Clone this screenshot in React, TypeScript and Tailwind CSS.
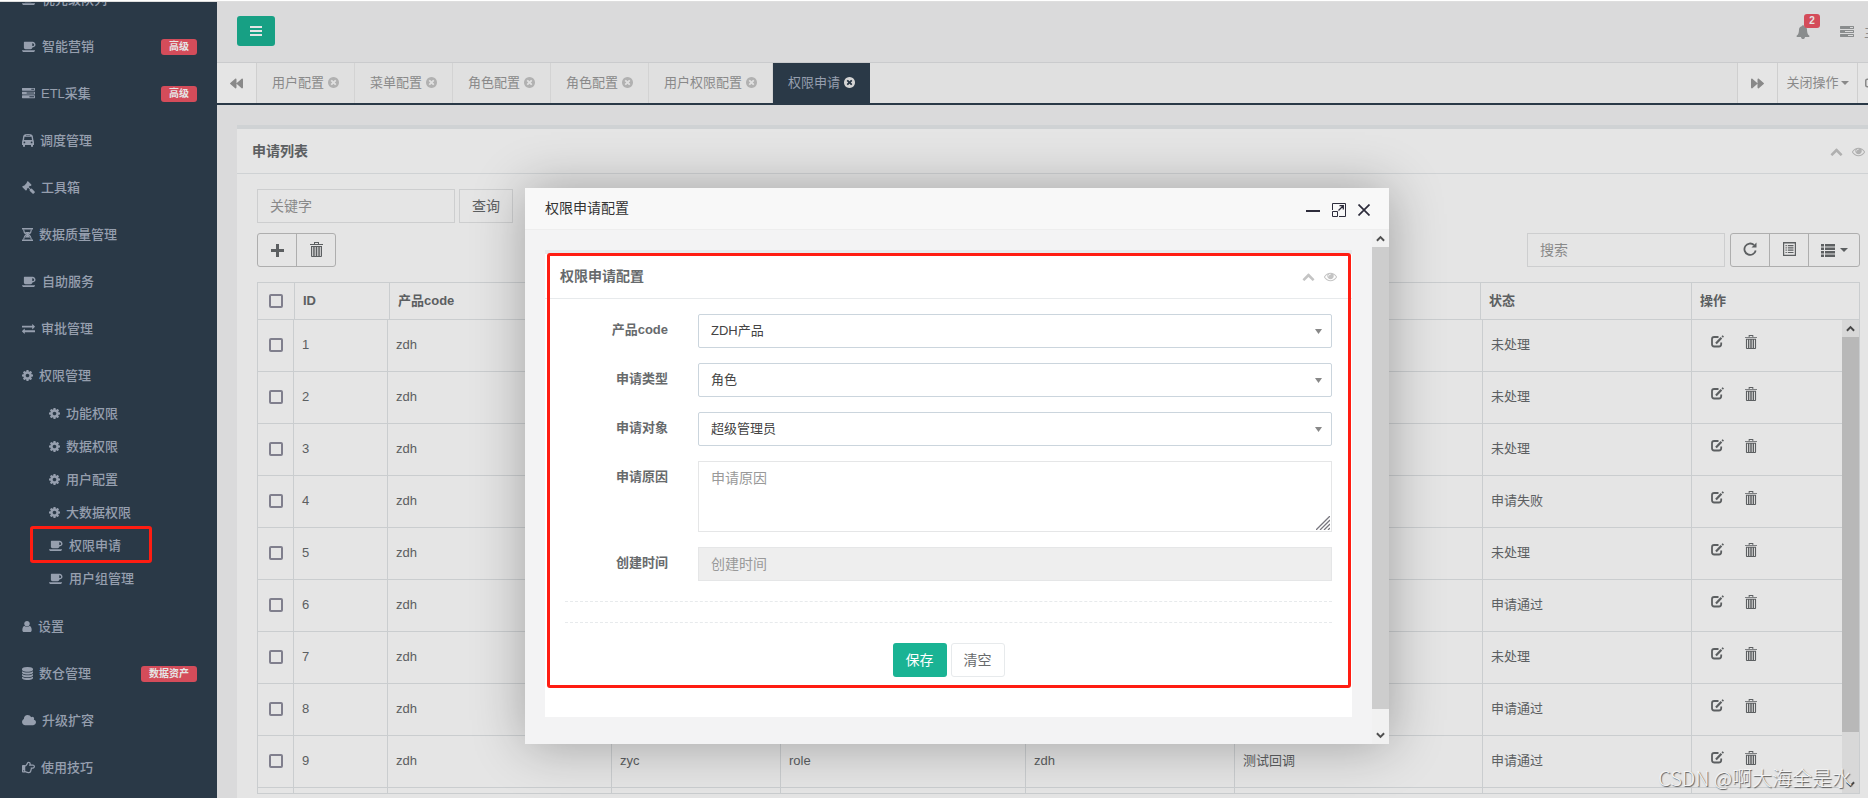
import { useState } from "react";
import type { ReactNode } from "react";
import { FaBackward, FaForward, FaRegHandPointRight, FaSignOutAlt } from "react-icons/fa";

type IconProps = { className?: string };

function CoffeeIcon({ className = "" }: IconProps) {
  return (
    <svg viewBox="0 0 1920 1792" className={`h-[13px] w-[14px] ${className}`} fill="currentColor">
      <path d="M1664 640q0-80-56-136t-136-56h-64v384h64q80 0 136-56t56-136zm-1664 768h1792q0 106-75 181t-181 75h-1280q-106 0-181-75t-75-181zm1856-768q0 159-112.5 271.5t-271.5 112.5h-64v32q0 92-66 158t-158 66h-704q-92 0-158-66t-66-158v-736q0-26 19-45t45-19h1152q159 0 271.5 112.5t112.5 271.5z" />
    </svg>
  );
}

function TasksIcon({ className = "h-[13px] w-[13px]" }: IconProps) {
  return (
    <svg viewBox="0 0 1792 1792" className={className} fill="currentColor">
      <path d="M1024 1408h640v-128h-640v128zm-384-512h1024v-128h-1024v128zm640-512h384v-128h-384v128zm512 832v256q0 26-19 45t-45 19h-1664q-26 0-45-19t-19-45v-256q0-26 19-45t45-19h1664q26 0 45 19t19 45zm0-512v256q0 26-19 45t-45 19h-1664q-26 0-45-19t-19-45v-256q0-26 19-45t45-19h1664q26 0 45 19t19 45zm0-512v256q0 26-19 45t-45 19h-1664q-26 0-45-19t-19-45v-256q0-26 19-45t45-19h1664q26 0 45 19t19 45z" />
    </svg>
  );
}

function BusIcon() {
  return (
    <svg viewBox="0 0 12 13" className="h-[13px] w-[12px]" fill="currentColor">
      <path
        fillRule="evenodd"
        d="M3.200 0.300Q6-0.300 8.800 0.300Q10.600 0.700 10.900 2.500L11.300 5.500Q12 7 12 8.500V11H11V12.200Q11 13 10 13T9 12.200V11H3V12.200Q3 13 2 13T1 12.200V11H0V8.500Q0 7 0.700 5.500L1.100 2.500Q1.400 0.700 3.200 0.300zM4 1.200H8V1.800H4zM2.500 2.800L2 6H10L9.500 2.800zM2.400 7.500A0.900 0.900 0 1 0 2.400 9.300A0.900 0.900 0 1 0 2.400 7.500zM9.600 7.500A0.900 0.900 0 1 0 9.600 9.300A0.900 0.900 0 1 0 9.600 7.500z"
      />
    </svg>
  );
}

function HourglassIcon() {
  return (
    <svg viewBox="0 0 11 13" className="h-[13px] w-[11px]" fill="none" stroke="currentColor">
      <path d="M0 0.800H11M0 12.200H11" strokeWidth="1.600" />
      <path d="M1.600 1.500Q1.600 4.500 4.400 6.500Q1.600 8.500 1.600 11.500M9.400 1.500Q9.400 4.500 6.600 6.500Q9.400 8.500 9.400 11.500" strokeWidth="1.200" />
      <path d="M3 4H8L6 6.500L8.200 9.500H2.800L5 6.500z" fill="currentColor" stroke="none" />
    </svg>
  );
}

function CogIcon() {
  return (
    <svg viewBox="128 0 1536 1792" className="h-[13px] w-[11px]" fill="currentColor">
      <path d="M1152 896q0-106-75-181t-181-75-181 75-75 181 75 181 181 75 181-75 75-181zm512-109v222q0 12-8 23t-20 13l-185 28q-19 54-39 91 35 50 107 138 10 12 10 25t-9 23q-27 37-99 108t-94 71q-12 0-26-9l-138-108q-44 23-91 38-16 136-29 186-7 28-36 28h-222q-14 0-24.5-8.5t-11.5-21.5l-28-184q-49-16-90-37l-141 107q-10 9-25 9-14 0-25-11-126-114-165-168-7-10-7-23 0-12 8-23 15-21 51-66.5t54-70.5q-27-50-41-99l-183-27q-13-2-21-12.5t-8-23.5v-222q0-12 8-23t19-13l186-28q14-46 39-92-40-57-107-138-10-12-10-24 0-10 9-23 26-36 98.5-107.5t94.5-71.5q13 0 26 10l138 107q44-23 91-38 16-136 29-186 7-28 36-28h222q14 0 24.5 8.5t11.5 21.5l28 184q49 16 90 37l142-107q9-9 24-9 13 0 25 10 129 119 165 170 7 8 7 22 0 12-8 23-15 21-51 66.5t-54 70.5q26 50 41 98l183 28q13 2 21 12.5t8 23.5z" />
    </svg>
  );
}

function GavelIcon() {
  return (
    <svg viewBox="0 0 1792 1792" className="h-[13px] w-[13px]" fill="currentColor">
      <path d="M1771 1536q0 53-37 90l-107 108q-39 37-91 37-53 0-90-37l-363-364q-38-36-38-90 0-53 43-96l-256-256-126 126q-14 14-34 14t-34-14q2 2 12.5 12t12.5 13 10 11.5 10 13.5 6 13.5 5.5 16.5 1.5 18q0 38-28 68-3 3-16.5 18t-19 20.5-18.5 16.5-22 15.5-22 9-26 4.5q-40 0-68-28l-408-408q-28-28-28-68 0-13 4.5-26t9-22 15.5-22 16.5-18.5 20.5-19 18-16.5q30-28 68-28 10 0 18 1.5t16.5 5.5 13.5 6 13.5 10 11.5 10 13 12.5 12 12.5q-14-14-14-34t14-34l348-348q14-14 34-14t34 14q-2-2-12.5-12t-12.5-13-10-11.5-10-13.5-6-13.5-5.500-16.5-1.5-18q0-38 28-68 3-3 16.5-18t19-20.5 18.5-16.5 22-15.5 22-9 26-4.5q40 0 68 28l408 408q28 28 28 68 0 13-4.5 26t-9 22-15.5 22-16.5 18.5-20.5 19-18 16.5q-30 28-68 28-10 0-18-1.5t-16.5-5.5-13.5-6-13.5-10-11.5-10-13-12.5-12-12.5q14 14 14 34t-14 34l-126 126 256 256q43-43 96-43 52 0 91 37l363 363q37 39 37 91z" />
    </svg>
  );
}

function ExchangeIcon() {
  return (
    <svg viewBox="0 0 1792 1792" className="h-[13px] w-[13px]" fill="currentColor">
      <path d="M1792 1184v192q0 13-9.5 22.5t-22.5 9.5h-1376v192q0 13-9.5 22.5t-22.5 9.5q-12 0-24-10l-319-320q-9-9-9-22 0-14 9-23l320-320q9-9 23-9 13 0 22.5 9.5t9.5 22.5v192h1376q13 0 22.5 9.5t9.5 22.5zm0-544q0 14-9 23l-320 320q-9 9-23 9-13 0-22.5-9.5t-9.5-22.5v-192h-1376q-13 0-22.5-9.5t-9.5-22.5v-192q0-13 9.5-22.5t22.5-9.5h1376v-192q0-14 9-23t23-9q12 0 24 10l319 319q9 9 9 23z" />
    </svg>
  );
}

function UserIcon() {
  return (
    <svg viewBox="256 0 1280 1792" className="h-[13px] w-[10px]" fill="currentColor">
      <path d="M1536 1399q0 109-62.5 187t-150.5 78h-854q-88 0-150.5-78t-62.5-187q0-85 8.5-160.5t31.5-152 58.5-131 94-89 134.5-34.5q131 128 313 128t313-128q76 0 134.5 34.5t94 89 58.5 131 31.5 152 8.5 160.5zm-256-887q0 159-112.5 271.5t-271.5 112.5-271.5-112.5-112.5-271.5 112.5-271.5 271.5-112.5 271.5 112.5 112.5 271.5z" />
    </svg>
  );
}

function DatabaseIcon() {
  return (
    <svg viewBox="128 0 1536 1792" className="h-[13px] w-[11px]" fill="currentColor">
      <path d="M896 768q237 0 443-43t325-127v170q0 69-103 128t-280 93.5-385 34.5-385-34.5-280-93.5-103-128v-170q119 84 325 127t443 43zm0 768q237 0 443-43t325-127v170q0 69-103 128t-280 93.5-385 34.5-385-34.5-280-93.5-103-128v-170q119 84 325 127t443 43zm0-384q237 0 443-43t325-127v170q0 69-103 128t-280 93.5-385 34.5-385-34.5-280-93.5-103-128v-170q119 84 325 127t443 43zm0-1152q208 0 385 34.5t280 93.5 103 128v128q0 69-103 128t-280 93.5-385 34.5-385-34.5-280-93.5-103-128v-128q0-69 103-128t280-93.5 385-34.5z" />
    </svg>
  );
}

function CloudIcon() {
  return (
    <svg viewBox="64 0 1920 1792" className="h-[13px] w-[14px]" fill="currentColor">
      <path d="M1984 1152q0 159-112.5 271.5t-271.5 112.5h-1088q-185 0-316.5-131.5t-131.5-316.5q0-132 71-241.5t187-163.5q-2-28-2-43 0-212 150-362t362-150q158 0 286.5 88t187.5 230q70-62 166-62 106 0 181 75t75 181q0 75-41 138 129 30 213 134.5t84 239.5z" />
    </svg>
  );
}

function BellIcon() {
  return (
    <svg viewBox="0 0 1792 1792" className="h-[14px] w-[14px]" fill="currentColor">
      <path d="M1728 1408q0 52-38 90t-90 38h-448q0 106-75 181t-181 75-181-75-75-181h-448q-52 0-90-38t-38-90q50-42 91-88t85-119.5 74.5-158.5 50-206 19.5-260q0-152 117-282.5t307-158.5q-8-19-8-39 0-40 28-68t68-28 68 28 28 68q0 20-8 39 190 28 307 158.5t117 282.5q0 139 19.5 260t50 206 74.5 158.5 85 119.5 91 88z" />
    </svg>
  );
}

function TimesCircleIcon({ className = "" }: IconProps) {
  return (
    <svg viewBox="128 128 1536 1536" className={`h-[11px] w-[11px] ${className}`} fill="currentColor">
      <path d="M1277 1122q0-26-19-45l-181-181 181-181q19-19 19-45 0-27-19-46l-90-90q-19-19-46-19-26 0-45 19l-181 181-181-181q-19-19-45-19-27 0-46 19l-90 90q-19 19-19 46 0 26 19 45l181 181-181 181q-19 19-19 45 0 27 19 46l90 90q19 19 46 19 26 0 45-19l181-181 181 181q19 19 45 19 27 0 46-19l90-90q19-19 19-46zm387-226q0 209-103 385.5t-279.5 279.5-385.5 103-385.5-103-279.5-279.5-103-385.5 103-385.5 279.5-279.5 385.5-103 385.5 103 279.5 279.5 103 385.5z" />
    </svg>
  );
}

function ChevronUpIcon() {
  return (
    <svg viewBox="0 0 1792 1792" className="h-[13px] w-[13px]" fill="currentColor">
      <path d="M1683 1331l-166 165q-19 19-45 19t-45-19l-531-531-531 531q-19 19-45 19t-45-19l-166-165q-19-19-19-45.5t19-45.5l742-741q19-19 45-19t45 19l742 741q19 19 19 45.5t-19 45.5z" />
    </svg>
  );
}

function EyeIcon() {
  return (
    <svg viewBox="0 0 1792 1792" className="h-[13px] w-[13px]" fill="currentColor">
      <path d="M1664 960q-152-236-381-353 61 104 61 225 0 185-131.5 316.5t-316.5 131.5-316.5-131.5-131.5-316.5q0-121 61-225-229 117-381 353 133 205 333.5 326.5t434.5 121.5 434.5-121.5 333.5-326.5zm-720-384q0-20-14-34t-34-14q-125 0-214.5 89.5t-89.5 214.5q0 20 14 34t34 14 34-14 14-34q0-86 61-147t147-61q20 0 34-14t14-34zm848 384q0 34-20 69-140 230-376.5 368.5t-499.5 138.5-499.5-139-376.5-368q-20-35-20-69t20-69q140-229 376.5-368t499.5-139 499.5 139 376.5 368q20 35 20 69z" />
    </svg>
  );
}

function TrashIcon({ className = "h-[14px] w-[12px]" }: IconProps) {
  return (
    <svg viewBox="0 0 13 15" className={className} fill="currentColor">
      <path d="M4 0h5v2h4v1H0V2h4zM5 1v1h3V1z" fillRule="evenodd" />
      <path d="M1 4h11v10q0 1-1 1H2q-1 0-1-1zM2.2 5v9h1V5zm2.5 0v9h1V5zm2.6 0v9h1V5zm2.5 0v9h1V5z" fillRule="evenodd" />
    </svg>
  );
}

function EditIcon() {
  return (
    <svg viewBox="0 0 14 13" className="h-[13px] w-[14px]" fill="none" stroke="currentColor">
      <path d="M7.5 2H3.2Q1 2 1 4.200V9.300Q1 11.500 3.200 11.500H8Q10.200 11.500 10.200 9.300V7.500" strokeWidth="1.800" />
      <path d="M5 8.500L10.400 2.800" strokeWidth="2.200" />
      <path d="M11.200 2L12.300 0.900" strokeWidth="2" />
    </svg>
  );
}

function Caret() {
  return (
    <svg viewBox="0 0 8 4" className="h-[4px] w-[8px]" fill="currentColor">
      <path d="M0 0h8L4 4z" />
    </svg>
  );
}

function PanelTools() {
  return (
    <div className="flex items-center gap-[9px] text-[#c4c4c4]">
      <button type="button" aria-label="收起">
        <ChevronUpIcon />
      </button>
      <button type="button" aria-label="显示">
        <EyeIcon />
      </button>
    </div>
  );
}

function ScrollBar({ thumb }: { thumb: string }) {
  return (
    <div className="flex w-[17px] shrink-0 flex-col bg-[#f1f1f1] text-[#505050]">
      <div className="flex h-[17px] items-center justify-center">
        <svg viewBox="0 0 10 7" className="h-[7px] w-[9px]" fill="none" stroke="currentColor" strokeWidth="2.200">
          <path d="M1 6l4-4 4 4" />
        </svg>
      </div>
      <div className="flex-1">
        <div className={`bg-[#cdcdcd] ${thumb}`} />
      </div>
      <div className="flex h-[17px] items-center justify-center">
        <svg viewBox="0 0 10 7" className="h-[7px] w-[9px]" fill="none" stroke="currentColor" strokeWidth="2.200">
          <path d="M1 1l4 4 4-4" />
        </svg>
      </div>
    </div>
  );
}

type MenuItem = { label: string; icon: ReactNode; badge?: string; marked?: boolean };

const TOP_MENU: MenuItem[] = [
  { label: "优先级队列", icon: <CoffeeIcon /> },
  { label: "智能营销", icon: <CoffeeIcon />, badge: "高级" },
  { label: "ETL采集", icon: <TasksIcon />, badge: "高级" },
  { label: "调度管理", icon: <BusIcon /> },
  { label: "工具箱", icon: <GavelIcon /> },
  { label: "数据质量管理", icon: <HourglassIcon /> },
  { label: "自助服务", icon: <CoffeeIcon /> },
  { label: "审批管理", icon: <ExchangeIcon /> },
  { label: "权限管理", icon: <CogIcon /> },
];

const SUB_MENU: MenuItem[] = [
  { label: "功能权限", icon: <CogIcon /> },
  { label: "数据权限", icon: <CogIcon /> },
  { label: "用户配置", icon: <CogIcon /> },
  { label: "大数据权限", icon: <CogIcon /> },
  { label: "权限申请", icon: <CoffeeIcon />, marked: true },
  { label: "用户组管理", icon: <CoffeeIcon /> },
];

const BOTTOM_MENU: MenuItem[] = [
  { label: "设置", icon: <UserIcon /> },
  { label: "数仓管理", icon: <DatabaseIcon />, badge: "数据资产" },
  { label: "升级扩容", icon: <CloudIcon /> },
  { label: "使用技巧", icon: <FaRegHandPointRight className="h-[13px] w-[13px]" /> },
];

const TABS = ["用户配置", "菜单配置", "角色配置", "角色配置", "用户权限配置", "权限申请"];
const ACTIVE_TAB = 5;

const ROWS = [
  { id: 1, status: "未处理" },
  { id: 2, status: "未处理" },
  { id: 3, status: "未处理" },
  { id: 4, status: "申请失败" },
  { id: 5, status: "未处理" },
  { id: 6, status: "申请通过" },
  { id: 7, status: "未处理" },
  { id: 8, status: "申请通过" },
  { id: 9, status: "申请通过" },
];

function MenuLink({ item }: { item: MenuItem }) {
  return (
    <li>
      <a href="#" className="flex h-[47px] items-center gap-[6px] pr-5 pl-[22px]">
        {item.icon}
        <span>{item.label}</span>
        {item.badge && (
          <span className="ml-auto h-4 rounded-[3px] bg-[#ed5565] px-2 text-[10px] leading-[15px] font-bold text-white">
            {item.badge}
          </span>
        )}
      </a>
    </li>
  );
}

function Sidebar() {
  return (
    <aside className="w-[217px] shrink-0 overflow-hidden bg-[#2f4050] text-[13px] font-medium text-[#a7b1c2]">
      <ul className="-mt-[26px]">
        {TOP_MENU.map((item) => (
          <MenuLink key={item.label} item={item} />
        ))}
        <li>
          <ul className="-mt-[2px] pb-2">
            {SUB_MENU.map((item) => (
              <li key={item.label} className="relative">
                <a href="#" className="flex h-[33px] items-center gap-[6px] pl-[49px]">
                  {item.icon}
                  <span>{item.label}</span>
                </a>
                {item.marked && (
                  <div className="absolute -top-[3px] left-[30px] z-20 h-[37px] w-[122px] rounded-[3px] border-[3px] border-[#ff1d12]" />
                )}
              </li>
            ))}
          </ul>
        </li>
        {BOTTOM_MENU.map((item) => (
          <MenuLink key={item.label} item={item} />
        ))}
      </ul>
    </aside>
  );
}

function TopBar() {
  return (
    <header className="flex h-[61px] items-center justify-between border-b border-[#e1e3e5] pr-[22px] pb-[2px] pl-5">
      <button
        type="button"
        aria-label="菜单"
        className="flex h-[30px] w-[38px] items-center justify-center rounded-[3px] bg-[#1ab394] text-white"
      >
        <svg viewBox="0 0 12 10" className="h-[10px] w-[12px]" fill="currentColor">
          <path d="M0 0h12v2H0zM0 4h12v2H0zM0 8h12v2H0z" />
        </svg>
      </button>
      <div className="flex items-center gap-[30px] pt-[2px] text-[#999c9e]">
        <a href="#" aria-label="消息" className="relative">
          <BellIcon />
          <span className="absolute -top-[11px] left-2 h-[14px] w-4 rounded-[3px] bg-[#ed5565] text-center text-[10px] leading-[14px] font-bold text-white">
            2
          </span>
        </a>
        <a href="#" className="flex items-center gap-[10px] text-[14px]">
          <TasksIcon className="h-[14px] w-[14px]" />
          主题
        </a>
      </div>
    </header>
  );
}

function TabBar() {
  return (
    <nav className="flex h-[42px] border-b-2 border-[#2f4050] bg-[#fafafa] text-[13px] text-[#999]">
      <button type="button" aria-label="向左" className="flex w-10 items-center justify-center border-r border-[#e7e7e7] bg-white">
        <FaBackward className="h-[13px] w-[13px]" />
      </button>
      {TABS.map((tab, i) => (
        <a
          key={i}
          href="#"
          className={
            i === ACTIVE_TAB
              ? "flex items-center gap-1 bg-[#2f4050] px-[15px] pb-px text-[#a7b1c2]"
              : "flex items-center gap-1 border-r border-[#ebebeb] px-[15px] pb-px"
          }
        >
          {tab}
          <TimesCircleIcon className={i === ACTIVE_TAB ? "text-[#eee]" : "text-[#c6c6c6]"} />
        </a>
      ))}
      <button type="button" aria-label="向右" className="ml-auto flex w-10 items-center justify-center border-l border-[#e7e7e7] bg-white">
        <FaForward className="h-[13px] w-[13px]" />
      </button>
      <button type="button" className="flex w-20 items-center justify-center gap-[2px] border-l border-[#e7e7e7] bg-white">
        关闭操作
        <Caret />
      </button>
      <a href="#" className="flex w-[57px] items-center justify-center gap-1 border-l border-[#e7e7e7] bg-white">
        <FaSignOutAlt className="h-3 w-3" />
        退出
      </a>
    </nav>
  );
}

const CHECKBOX = "ml-[3px] block h-[14px] w-[14px] appearance-none rounded-[2px] border-2 border-[#8f8e9d]";
const TH = "border-r border-[#e1e5e7] px-2 text-left font-bold last:border-r-0";
const TD = "border-r border-b border-[#e1e5e7] px-2 pb-[2px]";

function ApplyTable() {
  return (
    <div className="mt-[15px] border border-[#e1e5e7] text-[13px]">
      <table className="w-full table-fixed border-separate border-spacing-0">
        <colgroup>
          <col className="w-[37px]" />
          <col className="w-[95px]" />
          <col className="w-[223px]" />
          <col className="w-[168px]" />
          <col className="w-[244px]" />
          <col className="w-[208px]" />
          <col className="w-[248px]" />
          <col className="w-[211px]" />
          <col />
        </colgroup>
        <thead>
          <tr className="h-9">
            <th className={TH}>
              <input type="checkbox" aria-label="全选" className={CHECKBOX} />
            </th>
            <th className={TH}>ID</th>
            <th className={TH}>产品code</th>
            <th className={TH}>申请人</th>
            <th className={TH}>申请类型</th>
            <th className={TH}>申请对象</th>
            <th className={TH}>申请原因</th>
            <th className={TH}>状态</th>
            <th className={TH}>操作</th>
          </tr>
        </thead>
      </table>
      <div className="flex h-[474px] border-t border-[#e1e5e7]">
        <div className="flex-1 overflow-hidden">
          <table className="w-full table-fixed border-separate border-spacing-0">
            <colgroup>
              <col className="w-[36px]" />
              <col className="w-[94px]" />
              <col className="w-[224px]" />
              <col className="w-[169px]" />
              <col className="w-[245px]" />
              <col className="w-[209px]" />
              <col className="w-[248px]" />
              <col className="w-[209px]" />
              <col />
            </colgroup>
            <tbody>
              {ROWS.map((row) => (
                <tr key={row.id} className="h-[52px]">
                  <td className={TD}>
                    <input type="checkbox" aria-label={`选择 ${row.id}`} className={CHECKBOX} />
                  </td>
                  <td className={TD}>{row.id}</td>
                  <td className={TD}>zdh</td>
                  <td className={TD}>zyc</td>
                  <td className={TD}>role</td>
                  <td className={TD}>zdh</td>
                  <td className={TD}>测试回调</td>
                  <td className={TD}>{row.status}</td>
                  <td className="border-b border-[#e1e5e7] pb-2 pl-[19px]">
                    <div className="flex items-center gap-5">
                      <button type="button" aria-label="编辑">
                        <EditIcon />
                      </button>
                      <button type="button" aria-label="删除">
                        <TrashIcon />
                      </button>
                    </div>
                  </td>
                </tr>
              ))}
              <tr className="h-[52px]">
                {Array.from({ length: 9 }, (_, i) => (
                  <td key={i} className={i < 8 ? TD : ""} />
                ))}
              </tr>
            </tbody>
          </table>
        </div>
        <ScrollBar thumb="h-[395px]" />
      </div>
    </div>
  );
}

function ApplyList() {
  return (
    <main className="pt-5 pr-[34px] pl-5">
      <section className="border-t-4 border-[#e7eaec] bg-white">
        <div className="flex h-[45px] items-center justify-between border-b border-[#e7eaec] px-[15px]">
          <h5 className="text-[14px] font-semibold">申请列表</h5>
          <PanelTools />
        </div>
        <div className="px-5 pt-[15px] pb-5">
          <form className="flex gap-1 text-[14px]">
            <input
              type="text"
              aria-label="关键字"
              placeholder="关键字"
              className="h-[34px] w-[198px] border border-[#e5e6e7] px-3 placeholder:text-[#999]"
            />
            <button type="button" className="h-[34px] w-[54px] border border-[#e5e6e7]">
              查询
            </button>
          </form>
          <div className="mt-[10px] flex justify-between text-[14px]">
            <div className="flex h-[34px] divide-x divide-[#c2c2c2] rounded-[3px] border border-[#c2c2c2]">
              <button type="button" aria-label="新增" className="flex w-[39px] items-center justify-center">
                <svg viewBox="0 0 13 13" className="h-[13px] w-[13px]" fill="currentColor">
                  <path d="M5 0h3v5h5v3H8v5H5V8H0V5h5z" />
                </svg>
              </button>
              <button type="button" aria-label="删除" className="flex w-[38px] items-center justify-center pb-[2px]">
                <TrashIcon className="h-[15px] w-[13px]" />
              </button>
            </div>
            <div className="flex gap-[5px]">
              <input
                type="text"
                aria-label="搜索"
                placeholder="搜索"
                className="h-[34px] w-[198px] border border-[#e5e6e7] px-3 placeholder:text-[#999]"
              />
              <div className="flex h-[34px] divide-x divide-[#c2c2c2] rounded-[3px] border border-[#c2c2c2]">
                <button type="button" aria-label="刷新" className="flex w-[39px] items-center justify-center pb-[2px]">
                  <svg viewBox="0 0 14 14" className="h-[14px] w-[14px]" fill="none" stroke="currentColor" strokeWidth="1.800">
                    <path d="M11 3A5.700 5.700 0 1 0 12.700 8.500" />
                    <path d="M13.500 0.500V5.500H8.500z" fill="currentColor" stroke="none" />
                  </svg>
                </button>
                <button type="button" aria-label="视图" className="flex w-[39px] items-center justify-center pb-[2px]">
                  <svg viewBox="0 0 13 14" className="h-[14px] w-[13px]" fill="currentColor">
                    <path
                      fillRule="evenodd"
                      d="M0 0h13v14H0zM1.200 1.500v11.300h10.600V1.500zM2.500 3h1.300v1.200H2.500zM4.800 3h5.700v1.200H4.800zM2.500 5.300h1.300v1.200H2.500zM4.800 5.300h5.700v1.200H4.800zM2.500 7.600h1.300v1.200H2.500zM4.800 7.600h5.700v1.200H4.800zM2.500 9.900h1.300v1.200H2.500zM4.800 9.900h5.700v1.200H4.800z"
                    />
                  </svg>
                </button>
                <button type="button" aria-label="列" className="flex w-[50px] items-center justify-center gap-[5px]">
                  <svg viewBox="0 0 14 13" className="h-[13px] w-[14px]" fill="currentColor">
                    <path d="M0 0h3v2.500H0zM4 0h10v2.500H4zM0 3.500h3V6H0zM4 3.500h10V6H4zM0 7h3v2.500H0zM4 7h10v2.500H4zM0 10.500h3V13H0zM4 10.500h10V13H4z" />
                  </svg>
                  <Caret />
                </button>
              </div>
            </div>
          </div>
          <ApplyTable />
        </div>
      </section>
    </main>
  );
}

const LABEL = "w-[103px] shrink-0 pt-[7px] text-right text-[13px] leading-[18px] font-bold";

function SelectRow({ id, label, options }: { id: string; label: string; options: string[] }) {
  const [value, setValue] = useState(options[0]);

  return (
    <div className="flex gap-[30px]">
      <label htmlFor={id} className={LABEL}>
        {label}
      </label>
      <div className="relative flex-1">
        <select
          id={id}
          value={value}
          onChange={(e) => setValue(e.target.value)}
          className="h-[34px] w-full appearance-none rounded-[2px] border border-[#cbd5dd] bg-white px-3 text-[13px] text-[#444]"
        >
          {options.map((option) => (
            <option key={option}>{option}</option>
          ))}
        </select>
        <svg viewBox="0 0 7 5" className="pointer-events-none absolute top-[15px] right-[10px] h-[5px] w-[7px]" fill="#888">
          <path d="M0 0h7L3.500 5z" />
        </svg>
      </div>
    </div>
  );
}

function ApplyDialog() {
  const [reason, setReason] = useState("");

  return (
    <div role="dialog" aria-label="权限申请配置" className="w-[864px] bg-white shadow-[1px_1px_50px_rgba(0,0,0,0.3)]">
      <div className="flex h-[42px] items-center justify-between border-b border-[#eee] bg-[#f8f8f8] pr-[19px] pl-5">
        <h4 className="pb-px text-[14px] leading-5 text-[#333]">权限申请配置</h4>
        <div className="flex items-center gap-3 pt-[2px] text-[#2d2c3b]">
          <button type="button" aria-label="最小化">
            <svg viewBox="0 0 14 14" className="h-[14px] w-[14px]" fill="currentColor">
              <path d="M0 7h14v2H0z" />
            </svg>
          </button>
          <button type="button" aria-label="最大化">
            <svg viewBox="0 0 14 14" className="h-[14px] w-[14px]" fill="none" stroke="currentColor">
              <path d="M0.500 7V0.500H13.500V13.500H7" />
              <path d="M0.500 8.500H5.500V13.500H0.500z" />
              <path d="M6.500 7.500L11 3M7.500 2.700H11.300V6.500" strokeWidth="1.300" />
            </svg>
          </button>
          <button type="button" aria-label="关闭">
            <svg viewBox="0 0 12 12" className="h-3 w-3" fill="none" stroke="currentColor" strokeWidth="1.700">
              <path d="M0.500 0.500l11 11M11.500 0.500l-11 11" />
            </svg>
          </button>
        </div>
      </div>
      <div className="flex h-[514px] bg-[#f3f3f4]">
        <div className="flex-1 p-5">
          <section className="relative border-t-4 border-[#e7eaec] bg-white">
            <div className="flex h-[45px] items-center justify-between border-b border-[#e7eaec] px-[15px]">
              <h5 className="text-[14px] font-semibold">权限申请配置</h5>
              <PanelTools />
            </div>
            <form className="px-5 pt-[15px] pb-10">
              <div className="flex flex-col gap-[15px]">
                <SelectRow id="product" label="产品code" options={["ZDH产品"]} />
                <SelectRow id="type" label="申请类型" options={["角色"]} />
                <SelectRow id="target" label="申请对象" options={["超级管理员"]} />
                <div className="flex gap-[30px]">
                  <label htmlFor="reason" className={LABEL}>
                    申请原因
                  </label>
                  <div className="relative flex-1">
                    <textarea
                      id="reason"
                      value={reason}
                      onChange={(e) => setReason(e.target.value)}
                      placeholder="申请原因"
                      className="block h-[71px] w-full resize-none border border-[#e5e6e7] px-3 py-[6px] text-[14px] leading-5 placeholder:text-[#999]"
                    />
                    <svg
                      viewBox="0 0 14 14"
                      className="pointer-events-none absolute right-[2px] bottom-[2px] h-[14px] w-[14px]"
                      stroke="#77767e"
                      strokeWidth="1.300"
                    >
                      <path d="M0 14L14 0M4 14L14 4M8 14L14 8M12 14L14 12" />
                    </svg>
                  </div>
                </div>
                <div className="flex gap-[30px]">
                  <label htmlFor="created" className={LABEL}>
                    创建时间
                  </label>
                  <input
                    id="created"
                    type="text"
                    disabled
                    placeholder="创建时间"
                    className="h-[34px] flex-1 border border-[#e5e6e7] bg-[#eee] px-3 text-[14px] placeholder:text-[#999]"
                  />
                </div>
              </div>
              <hr className="my-5 border-dashed border-[#e7eaec]" />
              <hr className="my-5 border-dashed border-[#e7eaec]" />
              <div className="flex justify-center gap-1 text-[14px]">
                <button type="button" className="h-[34px] w-[54px] rounded-[3px] bg-[#1ab394] text-white">
                  保存
                </button>
                <button
                  type="button"
                  onClick={() => setReason("")}
                  className="h-[34px] w-[54px] rounded-[3px] border border-[#e7eaec]"
                >
                  清空
                </button>
              </div>
            </form>
            <div className="pointer-events-none absolute -top-px right-[1px] bottom-[29px] left-[2px] rounded-[3px] border-[3px] border-[#ff1d12]" />
          </section>
        </div>
        <ScrollBar thumb="h-[462px]" />
      </div>
    </div>
  );
}

export default function App() {
  return (
    <div className="relative flex h-screen flex-col overflow-hidden bg-white pt-px font-['Liberation_Sans','Noto_Sans_CJK_SC',sans-serif] text-[#676a6c]">
      <div className="relative -mr-[46px] flex min-h-0 flex-1 border-t border-[#dedede] bg-[#f3f3f4]">
        <Sidebar />
        <div className="min-w-0 flex-1">
          <TopBar />
          <TabBar />
          <ApplyList />
        </div>
        <div className="absolute inset-0 z-10 flex items-start justify-center bg-black/10 pt-[186px]">
          <ApplyDialog />
        </div>
      </div>
      <div className="pointer-events-none absolute right-4 bottom-1 z-30 font-['Noto_Sans_CJK_SC',sans-serif] text-[20px] leading-8 font-light text-[#f4f4f4] [text-shadow:1px_1px_1px_#555]">
        CSDN @啊大海全是水
      </div>
    </div>
  );
}
